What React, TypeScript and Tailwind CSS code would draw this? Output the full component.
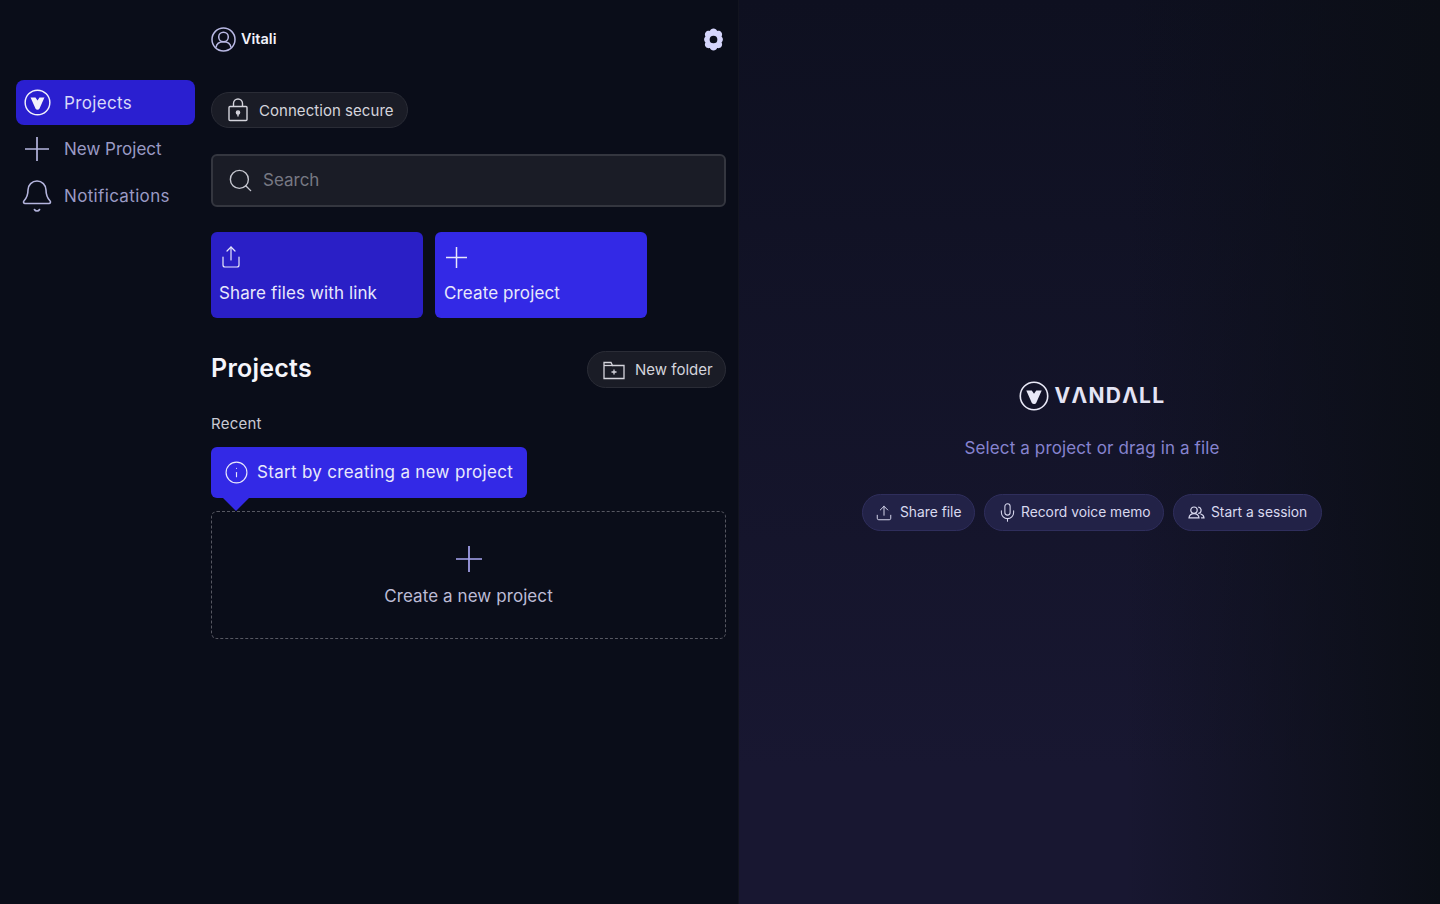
import { Bell, Info, Mic, Search, Share, Upload } from "lucide-react";

const VLogo = ({ size, color }: { size: number; color: string }) => (
  <svg width={size} height={size} viewBox="0 0 28 28" fill="none" className="shrink-0">
    <circle cx="14" cy="14" r="12.800" stroke={color} strokeWidth="1.500" />
    <path d="M6.800 8.800h5.100L14 11.800l2.100-3h5.100L16 20.500c-.8 1.300-3.200 1.300-4 0z" fill={color} />
  </svg>
);

// thin cross, edge to edge of its box
const Cross = ({ size, color, width = 1.500 }: { size: number; color: string; width?: number }) => (
  <svg width={size} height={size} viewBox={`0 0 ${size} ${size}`} fill="none" stroke={color} strokeWidth={width} className="shrink-0">
    <path d={`M${size / 2} 0V${size}M0 ${size / 2}H${size}`} />
  </svg>
);

const Gear = () => (
  <svg width="25" height="25" viewBox="0 0 24 24" className="shrink-0">
    <path
      fillRule="evenodd"
      d="M12 1.500c1.700 0 3 1 3.500 2.300 1.400-.3 3-.1 4 1.200 1 1.400 1 3 .2 4.200.9 1 1.300 1.700 1.300 2.800s-.4 1.800-1.300 2.800c.8 1.200.8 2.800-.2 4.200-1 1.300-2.600 1.500-4 1.200-.5 1.300-1.800 2.300-3.500 2.300s-3-1-3.500-2.300c-1.400.3-3 .1-4-1.200-1-1.400-1-3-.2-4.200-.9-1-1.300-1.700-1.300-2.800s.4-1.800 1.300-2.800c-.8-1.200-.8-2.800.2-4.200 1-1.300 2.600-1.500 4-1.200C9 2.500 10.300 1.500 12 1.500zM12 8.300a3.700 3.700 0 100 7.400 3.700 3.700 0 000-7.400z"
      fill="#d5d5fb"
    />
  </svg>
);

const UserRing = () => (
  <svg width="25" height="25" viewBox="0 0 25 25" fill="none" stroke="#b9b9e4" strokeWidth="1.500" className="shrink-0">
    <circle cx="12.500" cy="12.500" r="11.500" />
    <circle cx="12.500" cy="10" r="4.800" />
    <path d="M5 20.500c.6-3.600 3.400-5.700 7.500-5.700s6.900 2.100 7.500 5.700" />
  </svg>
);

const Lock = () => (
  <svg width="20" height="24" viewBox="0 0 20 24" fill="none" stroke="#d4d4dc" strokeWidth="1.400" className="shrink-0">
    <rect x="1" y="8.500" width="18" height="14" rx="1" />
    <path d="M5.500 8.500V5.500a4.500 4.500 0 019 0v3" />
    <circle cx="10" cy="14.500" r="1.600" fill="#d4d4dc" />
    <path d="M10 15.500v3" />
  </svg>
);

const FolderAdd = () => (
  <svg width="22" height="20" viewBox="0 0 22 20" fill="none" stroke="#d4d4dc" strokeWidth="1.300" className="shrink-0">
    <path d="M1 2.500V18.500H21V5.500H9.500L8 2.500H1z" />
    <path d="M1 5.500h8.500" />
    <path d="M11 9.500v5M8.500 12h5" />
  </svg>
);

const People = () => (
  <svg width="17" height="13" viewBox="0 0 17 13" fill="none" stroke="#d9d9ef" strokeWidth="1.200" strokeLinecap="round" className="shrink-0">
    <circle cx="6" cy="4.200" r="3.200" />
    <path d="M1 11.800c.3-2.500 2.300-4.200 5-4.200s4.700 1.700 5 4.200H1z" />
    <path d="M10.700 1.100a3.200 3.200 0 010 6.200M12.800 8c1.800.6 3 2 3.200 3.800h-2.500" />
  </svg>
);

const navRow = "flex items-center h-[46.500px] pl-[8px] gap-[14px] text-[17px] text-[#9a9ac4]";
const pill = "flex items-center rounded-full border border-[#2a2c36] bg-[#1a1c26] text-[#d4d4dc]";
const ghostBtn = "flex items-center h-[37px] rounded-full border border-[#2f2e5c] bg-[#222247] text-[13.800px] text-[#d9d9ef]";

export default function App() {
  return (
    <div className="flex h-[904px] w-[1440px] overflow-hidden bg-[#0a0d19] font-['Inter',sans-serif]">
      <aside className="w-[211px] shrink-0 pt-[80px] pl-[16px] pr-[16px]">
        <div className="flex items-center h-[45px] w-[179px] rounded-[8px] bg-[#2a1fd0] pl-[8px] gap-[14px] text-[17px] tracking-[0.02em] text-[#d8d8f8]">
          <div className="w-[26px] flex justify-center">
            <VLogo size={27} color="#f2f2fb" />
          </div>
          <span className="mt-[2px]">Projects</span>
        </div>
        <div className={`${navRow} mt-[1px]`}>
          <div className="w-[26px] flex justify-center">
            <Cross size={24} color="#b5b5de" width={1.700} />
          </div>
          <span className="mt-[1px]">New Project</span>
        </div>
        <div className={navRow}>
          <div className="w-[26px] flex justify-center">
            <Bell size={36} strokeWidth={1.050} color="#b5b5de" className="shrink-0" />
          </div>
          <span className="mt-[2px] tracking-[0.02em]">Notifications</span>
        </div>
      </aside>

      <main className="w-[528px] shrink-0 pr-[12px] border-r border-[#12141f]">
        <header className="flex items-center justify-between h-[78px]">
          <div className="flex items-center gap-[5px] text-[14.500px] font-semibold text-[#f2f2fb]">
            <UserRing />
            <span>Vitali</span>
          </div>
          <Gear />
        </header>

        <div className="mt-[14px] flex">
          <div className={`${pill} h-[36px] w-[197px] pl-[16px] gap-[11px] text-[15px] tracking-[0.003em]`}>
            <Lock />
            <span className="mt-[2px]">Connection secure</span>
          </div>
        </div>

        <div className="mt-[26px] flex items-center h-[53px] rounded-[6px] border-2 border-[#34363f] bg-[#1a1c26] pl-[14px] gap-[9px] text-[17px] text-[#777883]">
          <Search size={27} strokeWidth={1.250} color="#c5c6cf" />
          Search
        </div>

        <div className="mt-[25px] flex gap-[12px]">
          <div className="flex flex-col justify-between h-[86px] w-[212px] rounded-[6px] bg-[#2a1fc6] px-[8px] pt-[13px] pb-[14px] text-[#e8e8fb]">
            <Share size={24} strokeWidth={1.200} />
            <span className="text-[17px] leading-[22px] tracking-[0.007em]">Share files with link</span>
          </div>
          <div className="flex flex-col justify-between h-[86px] w-[212px] rounded-[6px] bg-[#3329e6] pl-[9px] pr-[8px] pt-[15px] pb-[14px] text-[#e8e8fb]">
            <div className="pl-[2px]">
              <Cross size={21} color="#e8e8fb" />
            </div>
            <span className="text-[17px] leading-[22px] tracking-[0.007em]">Create project</span>
          </div>
        </div>

        <div className="mt-[33px] flex items-center justify-between">
          <h1 className="pb-[2px] text-[25px] leading-[35px] font-semibold tracking-[0.01em] text-[#f5f5fb]">Projects</h1>
          <div className={`${pill} h-[37px] w-[139px] pl-[15px] gap-[10px] text-[15px]`}>
            <FolderAdd />
            <span className="mt-[2px]">New folder</span>
          </div>
        </div>

        <div className="mt-[25px] text-[15px] leading-[22px] tracking-[0.015em] text-[#c9cad3]">Recent</div>

        <div className="relative mt-[12px] flex items-center h-[51px] w-[316px] rounded-[6px] bg-[#3329e6] pl-[13px] gap-[8px] text-[17px] tracking-[0.018em] text-[#e8e8fb]">
          <Info size={25} strokeWidth={1.100} />
          Start by creating a new project
          <div className="absolute left-[12px] top-[51px] h-0 w-0 border-x-[13px] border-t-[13px] border-x-transparent border-t-[#3329e6]" />
        </div>

        <div className="mt-[13px] flex flex-col items-center h-[128px] rounded-[6px] border border-dashed border-[#565761] pt-[34px] text-[17px] tracking-[0.005em] text-[#bcbcd6]">
          <Cross size={26} color="#a9a6f2" width={1.700} />
          <span className="mt-[12px] leading-[24px]">Create a new project</span>
        </div>
      </main>

      <section className="flex-1 flex flex-col items-center pt-[380px] pl-[5px] bg-[linear-gradient(90deg,transparent_55%,#0b0e16_100%),linear-gradient(180deg,#0e1020_0%,#181731_85%)]">
        <div className="flex items-center gap-[6px] h-[32px]">
          <VLogo size={30} color="#e9e9f7" />
          <span className="text-[21px] font-bold tracking-[0.06em] text-[#e4e4f4]">VΛNDΛLL</span>
        </div>
        <p className="mt-[24px] text-[17px] leading-[24px] tracking-[0.0075em] text-[#8683cf]">Select a project or drag in a file</p>
        <div className="mt-[34px] flex gap-[9px]">
          <div className={`${ghostBtn} w-[113px] pl-[12px] gap-[7px]`}>
            <Upload size={18} strokeWidth={1.300} className="shrink-0" />
            Share file
          </div>
          <div className={`${ghostBtn} w-[180px] pl-[12px] gap-[3px]`}>
            <Mic size={21} strokeWidth={1.200} className="shrink-0" />
            Record voice memo
          </div>
          <div className={`${ghostBtn} w-[149px] pl-[14px] gap-[6px]`}>
            <People />
            Start a session
          </div>
        </div>
      </section>
    </div>
  );
}
